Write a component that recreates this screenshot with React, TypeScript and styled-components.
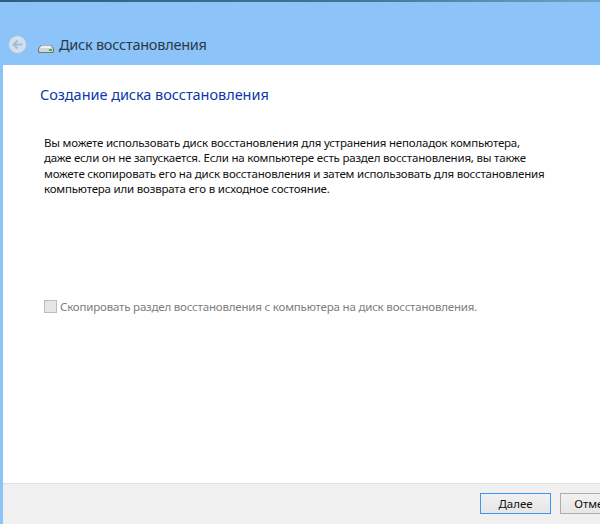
import React from "react";
import styled, { createGlobalStyle } from "styled-components";

const GlobalStyle = createGlobalStyle`
  html, body {
    margin: 0;
    padding: 0;
  }
  body {
    font-family: "Noto Sans", "Open Sans", sans-serif;
  }
`;

const Window = styled.div`
  width: 600px;
  height: 524px;
  overflow: hidden;
  display: flex;
  flex-direction: column;
  background: #8cc4fa;
`;

const TopStrip = styled.div`
  height: 2px;
  background: linear-gradient(90deg, #2f5f7d 0%, #3d7896 60%, #6ea4c6 100%);
`;

const TitleBar = styled.div`
  height: 63px;
  box-sizing: border-box;
  padding: 33px 0 0 8px;
  display: flex;
  align-items: flex-start;
`;

const BackButton = styled.div`
  width: 17px;
  height: 17px;
  border-radius: 50%;
  border: 1px solid #a9bfd3;
  background: #cfe0f0;
  display: flex;
  align-items: center;
  justify-content: center;
`;

const DriveIcon = styled.svg`
  width: 16px;
  height: 8px;
  margin: 10px 0 0 11px;
`;

const WindowTitle = styled.div`
  margin-left: 5px;
  font-size: 14.5px;
  line-height: 18px;
  color: #2b3a46;
  letter-spacing: -0.25px;
`;

const Content = styled.div`
  flex: 1;
  margin-left: 3px;
  background: #fff;
  display: flex;
  flex-direction: column;
`;

const Main = styled.div`
  flex: 1;
  padding: 19px 0 0 37px;
`;

const Heading = styled.div`
  font-size: 14.5px;
  line-height: 20px;
  color: #0d38a8;
  letter-spacing: -0.04px;
`;

const Description = styled.p`
  margin: 31px 0 0 4px;
  font-size: 11.5px;
  line-height: 15.35px;
  color: #111;
  letter-spacing: -0.2px;
  white-space: nowrap;
`;

const CheckRow = styled.div`
  margin: 103px 0 0 4px;
  display: flex;
  align-items: center;
  gap: 3px;
`;

const CheckBox = styled.span`
  width: 11px;
  height: 11px;
  border: 1px solid #bcbcbc;
  background: #e6e6e6;
`;

const CheckLabel = styled.span`
  font-size: 11.5px;
  line-height: 15px;
  color: #7d7d7d;
  letter-spacing: -0.19px;
  white-space: nowrap;
`;

const Footer = styled.div`
  height: 41px;
  box-sizing: border-box;
  border-top: 1px solid #dfdfdf;
  background: #f0f0f0;
  padding: 9px 0 0 477px;
  display: flex;
  gap: 9px;
  overflow: hidden;
`;

const DialogButton = styled.button<{ $primary?: boolean }>`
  flex: none;
  width: 69px;
  height: 19px;
  box-sizing: content-box;
  padding: 0;
  border: ${(p) => (p.$primary ? "1px solid #3a97f2" : "1px solid #acacac")};
  background: linear-gradient(#f1f1f1, #e6e6e6);
  font-family: inherit;
  font-size: 11.5px;
  line-height: 19px;
  color: #111;
`;

const Mnemonic = styled.span`
  text-decoration: underline;
`;

export default function App() {
  return (
    <Window>
      <GlobalStyle />
      <TopStrip />
      <TitleBar>
        <BackButton>
          <svg width="13" height="13" viewBox="0 0 13 13" fill="none" stroke="#a4bdd4" strokeWidth="2">
            <path d="M11.5 6.5H2.5M6.5 2.5l-4 4 4 4" />
          </svg>
        </BackButton>
        <DriveIcon viewBox="0 0 16 8">
          <path d="M3 0h10l3 3.5v3A1.5 1.5 0 0 1 14.5 8h-13A1.5 1.5 0 0 1 0 6.5v-3z" fill="#6f777c" />
          <path d="M3.4.6h9.2L14.4 3H1.6z" fill="#eef0f1" />
          <rect x="1" y="3" width="14" height="4" rx="1" fill="#d3d6d8" />
          <rect x="11" y="4" width="3" height="2" fill="#3fae3c" />
        </DriveIcon>
        <WindowTitle>Диск восстановления</WindowTitle>
      </TitleBar>
      <Content>
        <Main>
          <Heading>Создание диска восстановления</Heading>
          <Description>
            Вы можете использовать диск восстановления для устранения неполадок компьютера,
            <br />
            даже если он не запускается. Если на компьютере есть раздел восстановления, вы также
            <br />
            можете скопировать его на диск восстановления и затем использовать для восстановления
            <br />
            компьютера или возврата его в исходное состояние.
          </Description>
          <CheckRow>
            <CheckBox />
            <CheckLabel>Скопировать раздел восстановления с компьютера на диск восстановления.</CheckLabel>
          </CheckRow>
        </Main>
        <Footer>
          <DialogButton $primary>
            <Mnemonic>Д</Mnemonic>алее
          </DialogButton>
          <DialogButton>Отмена</DialogButton>
        </Footer>
      </Content>
    </Window>
  );
}
